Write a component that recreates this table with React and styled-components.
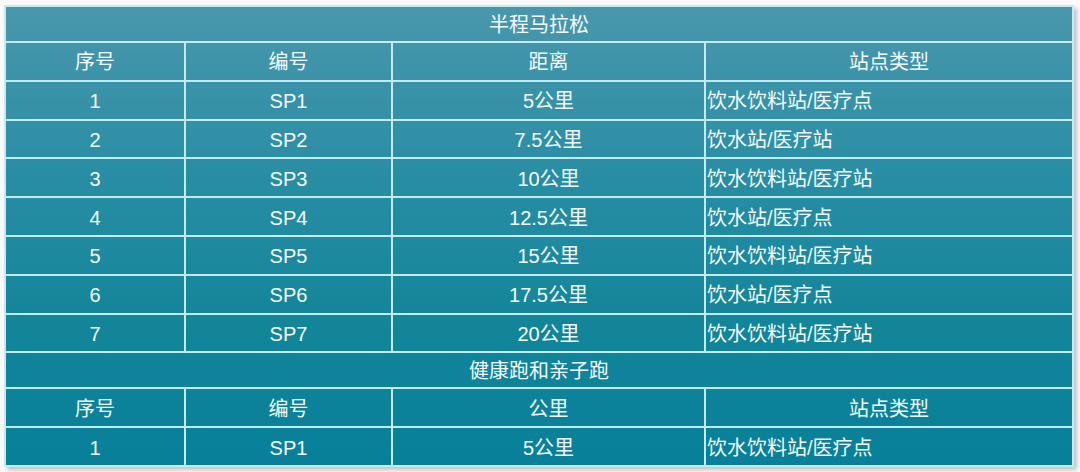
import React from "react";
import styled, { createGlobalStyle } from "styled-components";

const GlobalStyle = createGlobalStyle`
  html, body {
    margin: 0;
    padding: 0;
    background: #fafafa;
  }
  body {
    font-family: "Liberation Sans", "Noto Sans CJK SC", sans-serif;
  }
`;

const Page = styled.div`
  padding: 5px 0 0 4px;
  width: 1080px;
  height: 472px;
  box-sizing: border-box;
`;

const Table = styled.table`
  border-collapse: collapse;
  width: 1068px;
  table-layout: fixed;
  background: linear-gradient(180deg, #4a97ac 0%, #2a8ea5 35%, #128599 70%, #08809a 100%);
  box-shadow: 3px 3px 4px rgba(0, 0, 0, 0.22);
  color: #f4fbfc;
  font-size: 20px;
`;

const Row = styled.tr`
  height: ${(p) => (p.$title ? "36px" : "38.8px")};
`;

const Cell = styled.td`
  border: 2px solid #c2ecf1;
  padding: 2px 0 0 ${(p) => (p.$left ? "1px" : "0")};
  text-align: ${(p) => (p.$left ? "left" : "center")};
  vertical-align: middle;
  white-space: nowrap;
  line-height: 1;
`;

const TitleCell = styled(Cell)`
  text-align: center;
`;

const half = [
  ["1", "SP1", "5公里", "饮水饮料站/医疗点"],
  ["2", "SP2", "7.5公里", "饮水站/医疗站"],
  ["3", "SP3", "10公里", "饮水饮料站/医疗站"],
  ["4", "SP4", "12.5公里", "饮水站/医疗点"],
  ["5", "SP5", "15公里", "饮水饮料站/医疗站"],
  ["6", "SP6", "17.5公里", "饮水站/医疗点"],
  ["7", "SP7", "20公里", "饮水饮料站/医疗站"],
];

const fun = [["1", "SP1", "5公里", "饮水饮料站/医疗点"]];

function Section({ title, distLabel, rows }) {
  return (
    <>
      <Row $title>
        <TitleCell colSpan={4}>{title}</TitleCell>
      </Row>
      <Row>
        <Cell>序号</Cell>
        <Cell>编号</Cell>
        <Cell>{distLabel}</Cell>
        <Cell>站点类型</Cell>
      </Row>
      {rows.map((r) => (
        <Row key={title + r[0]}>
          <Cell>{r[0]}</Cell>
          <Cell>{r[1]}</Cell>
          <Cell>{r[2]}</Cell>
          <Cell $left>{r[3]}</Cell>
        </Row>
      ))}
    </>
  );
}

export default function App() {
  return (
    <Page>
      <GlobalStyle />
      <Table>
        <colgroup>
          <col style={{ width: 180 }} />
          <col style={{ width: 207 }} />
          <col style={{ width: 313 }} />
          <col style={{ width: 368 }} />
        </colgroup>
        <tbody>
          <Section title="半程马拉松" distLabel="距离" rows={half} />
          <Section title="健康跑和亲子跑" distLabel="公里" rows={fun} />
        </tbody>
      </Table>
    </Page>
  );
}
